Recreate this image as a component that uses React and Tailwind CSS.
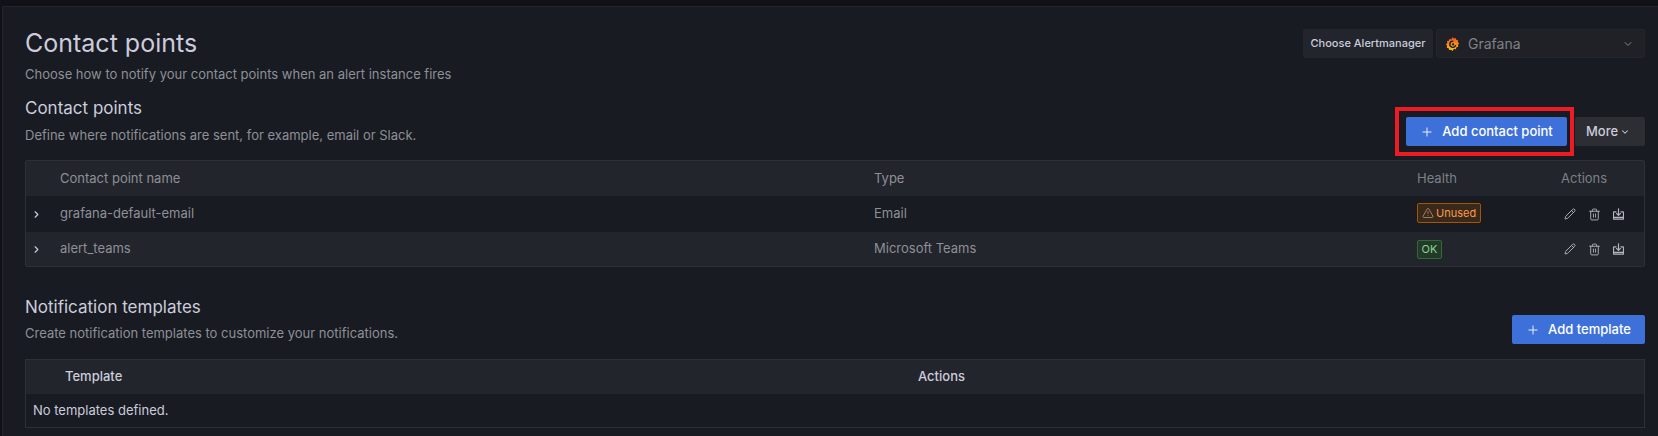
import { ChevronDown, ChevronRight, Pencil, Plus, Trash2, TriangleAlert } from "lucide-react";

function GrafanaLogo() {
  return (
    <svg width="15" height="16" viewBox="0 0 16 17" fill="none" className="-ml-[1px] shrink-0">
      <defs>
        <linearGradient id="grafanaFill" x1="8" y1="1" x2="8" y2="16" gradientUnits="userSpaceOnUse">
          <stop offset="0" stopColor="#ef4f26" />
          <stop offset="1" stopColor="#fbca0a" />
        </linearGradient>
      </defs>
      <path
        d="M8 1l1.400 1.600 2-.6.6 1.900 2 .5-.3 2 1.500 1.500-1.400 1.500.4 2-2 .6-.6 2-2-.4L8 16l-1.500-1.400-2 .4-.6-2-2-.6.4-2L1 8.900l1.500-1.500-.3-2 2-.5.6-1.900 2 .6z"
        fill="url(#grafanaFill)"
      />
      <path
        d="M8.400 5.400a3.300 3.300 0 1 0 2.900 4.900"
        stroke="#181b21"
        strokeWidth="1.500"
        strokeLinecap="round"
      />
      <circle cx="8.600" cy="8.900" r="1.200" fill="#181b21" />
    </svg>
  );
}

function ImportIcon() {
  return (
    <svg width="11" height="12" viewBox="0 0 11 12" fill="none" stroke="#b4b5be" strokeWidth="1.200" strokeLinecap="round" strokeLinejoin="round">
      <path d="M5.500 .8v6.400M3.500 5.300l2 2 2-2" />
      <path d="M3 3.800H1c-.3 0-.5.200-.5.500v6.400c0 .3.200.5.500.5h9c.3 0 .5-.2.500-.5V4.300c0-.3-.2-.5-.5-.5H8" />
      <path d="M1 9.300h9" />
    </svg>
  );
}

function RowActions() {
  return (
    <div className="flex items-center gap-[12px] pl-[3px] text-[#b4b5be]">
      <Pencil size={12} strokeWidth={1.900} />
      <Trash2 size={13} strokeWidth={1.700} />
      <ImportIcon />
    </div>
  );
}

function ContactRow({ name, type, badge, striped }) {
  return (
    <div className={`flex items-center text-[13px] text-[#8e9097] ${striped ? "h-[34px] bg-[#22252b]" : "h-[36px]"}`}>
      <div className="w-[34px] pl-[5px] text-[#ccccdc]">
        <ChevronRight size={11} strokeWidth={2.500} />
      </div>
      <div className="w-[814px]">{name}</div>
      <div className="w-[543px]">{type}</div>
      <div className="w-[144px]">{badge}</div>
      <RowActions />
    </div>
  );
}

export default function App() {
  return (
    <div className="h-[436px] w-[1658px] overflow-hidden bg-[#111217] pl-[2px] pt-[6px] font-['Inter',sans-serif]">
      <main className="h-[430px] rounded-tl-[2px] border-l border-t border-[#24262c] bg-[#181b21] pl-[22px] pr-[13px]">
        <header className="flex justify-between pt-[22px]">
          <div className="pt-[2px]">
            <h1 className="text-[25px] leading-[24px] text-[#ccccdc]">Contact points</h1>
            <p className="mt-[10px] text-[13px] leading-[18px] text-[#8e9097]">
              Choose how to notify your contact points when an alert instance fires
            </p>
          </div>
          <div className="flex gap-[3px]">
            <div className="flex h-[29px] w-[130px] items-center justify-center rounded-[2px] bg-[#22252b] text-[11px] font-medium text-[#ccccdc]">
              Choose Alertmanager
            </div>
            <div className="flex h-[29px] w-[209px] items-center rounded-[2px] border border-[#22252b] bg-[#1f2127] pl-[9px] pr-[10px] text-[14px] text-[#7f8188]">
              <GrafanaLogo />
              <span className="ml-[8px] flex-1">Grafana</span>
              <ChevronDown size={12} />
            </div>
          </div>
        </header>

        <section className="mt-[14px]">
          <div className="flex justify-between">
            <div>
              <h2 className="text-[17px] leading-[22px] text-[#ccccdc]">Contact points</h2>
              <p className="mt-[7px] text-[13px] leading-[18px] text-[#8e9097]">
                Define where notifications are sent, for example, email or Slack.
              </p>
            </div>
            <div className="mt-[20px] flex h-[29px] gap-[8px]">
              <div className="relative">
                <button className="flex h-[29px] w-[161px] items-center justify-center gap-[8px] rounded-[2px] bg-[#3d71d9] text-[13px] font-medium text-white">
                  <Plus size={14} strokeWidth={1.500} />
                  Add contact point
                </button>
                <div className="absolute -left-[11px] -right-[7px] -top-[10px] -bottom-[10px] border-[4px] border-[#ed1c24]" />
              </div>
              <button className="flex h-[29px] w-[70px] items-center gap-[2px] rounded-[2px] bg-[#2c2e33] pl-[11px] text-[13px] font-medium text-[#ccccdc]">
                More
                <ChevronDown size={10} strokeWidth={2.500} />
              </button>
            </div>
          </div>

          <div className="mt-[14px] rounded-[2px] border border-[#2e3036]">
            <div className="flex h-[35px] items-center bg-[#22252b] text-[13px] text-[#8e9097]">
              <div className="w-[34px]" />
              <div className="w-[814px]">Contact point name</div>
              <div className="w-[543px]">Type</div>
              <div className="w-[144px] text-[#7b8087]">Health</div>
              <div className="text-[#7b8087]">Actions</div>
            </div>
            <ContactRow
              name="grafana-default-email"
              type="Email"
              badge={
                <span className="inline-flex h-[20px] w-[64px] items-center gap-[2px] rounded-[2px] border border-[#a85400] bg-[#38291b] pl-[4px] text-[11px] text-[#ff9a4a]">
                  <TriangleAlert size={12} strokeWidth={1.300} className="shrink-0 text-[#e0a77c]" />
                  Unused
                </span>
              }
            />
            <ContactRow
              striped
              name="alert_teams"
              type="Microsoft Teams"
              badge={
                <span className="inline-flex h-[19px] w-[25px] items-center justify-center rounded-[2px] border border-[#2f6b37] bg-[#243a29] text-[11px] text-[#86d48f]">
                  OK
                </span>
              }
            />
          </div>
        </section>

        <section className="mt-[29px]">
          <div className="flex items-start justify-between">
            <div>
              <h2 className="text-[17px] leading-[22px] text-[#ccccdc]">Notification templates</h2>
              <p className="mt-[6px] text-[13px] leading-[18px] text-[#8e9097]">
                Create notification templates to customize your notifications.
              </p>
            </div>
            <button className="mt-[19px] flex h-[29px] w-[133px] items-center justify-center gap-[8px] rounded-[2px] bg-[#3d71d9] text-[13px] font-medium text-white">
              <Plus size={14} strokeWidth={1.500} />
              Add template
            </button>
          </div>

          <div className="mt-[15px] border border-[#2e3036]">
            <div className="flex h-[34px] items-center bg-[#22252b] text-[13px] font-medium text-[#ccccdc]">
              <div className="w-[892px] pl-[39px]">Template</div>
              <div>Actions</div>
            </div>
            <div className="flex h-[33px] items-center pl-[7px] text-[13px] text-[#ccccdc]">No templates defined.</div>
          </div>
        </section>
      </main>
    </div>
  );
}
